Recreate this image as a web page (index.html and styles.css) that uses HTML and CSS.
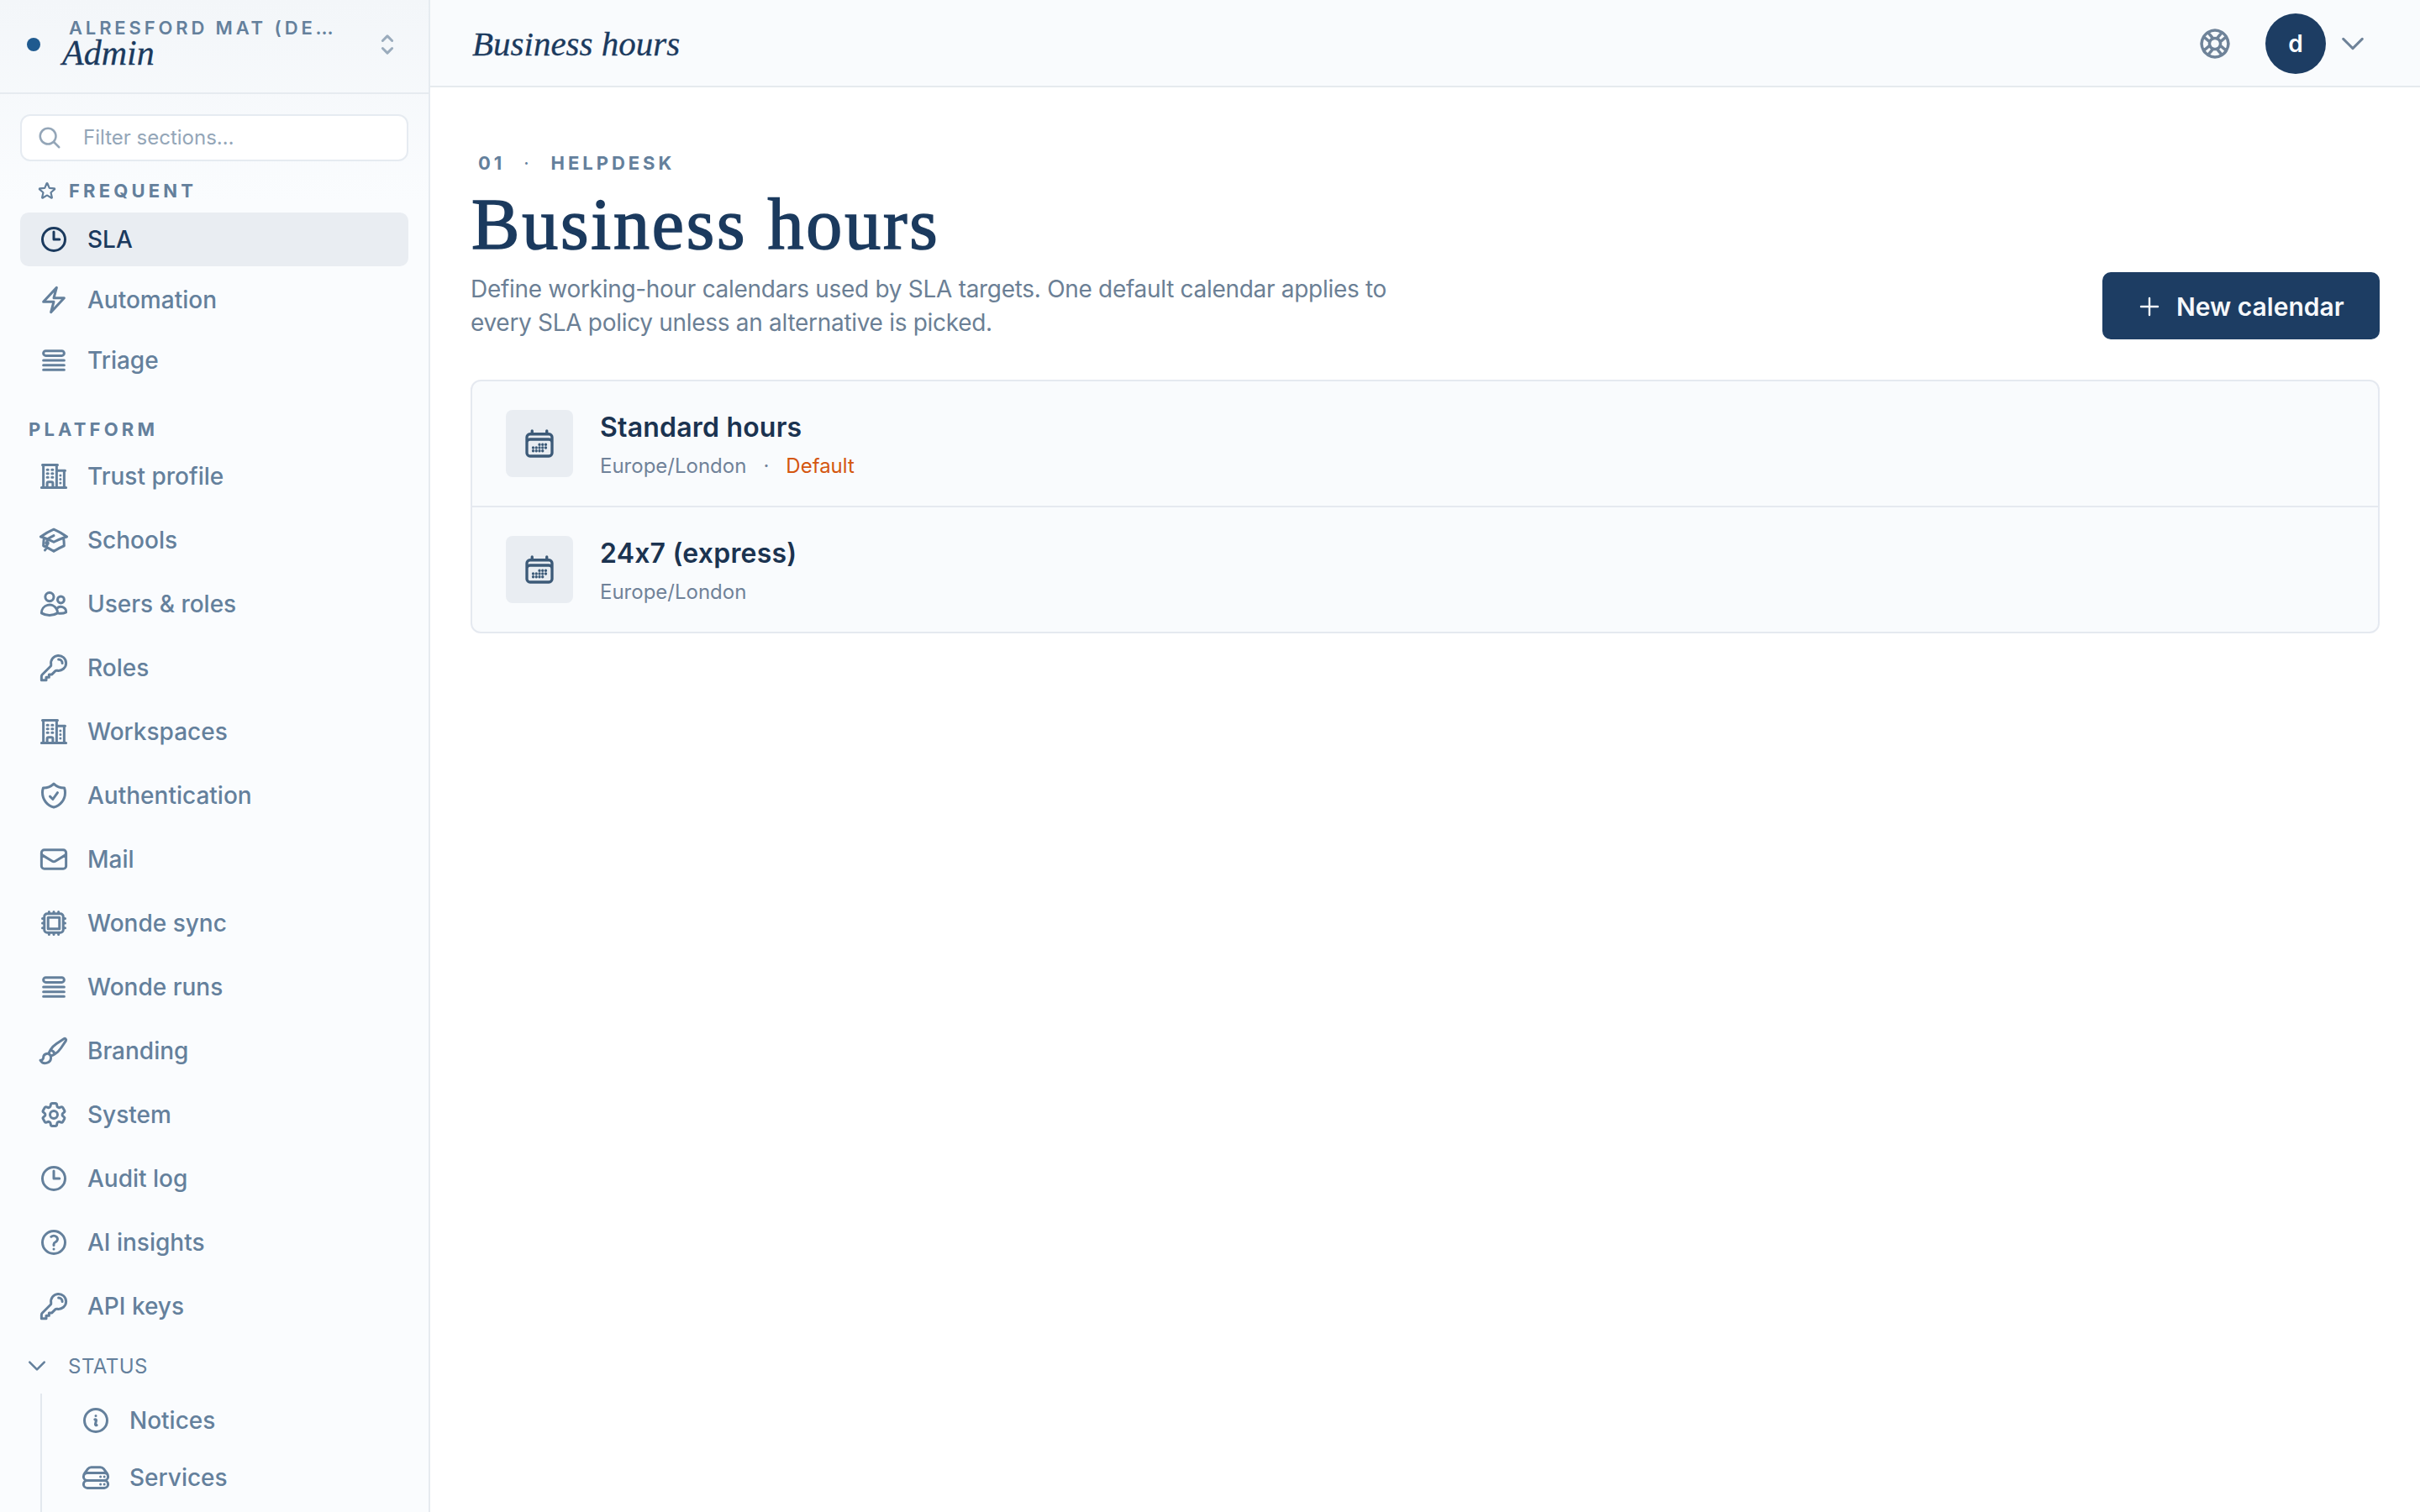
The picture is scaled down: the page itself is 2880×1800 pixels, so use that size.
FILE: index.html
```html
<!DOCTYPE html>
<html lang="en">
<head>
<meta charset="utf-8">
<title>Business hours</title>
<link rel="stylesheet" href="styles.css">
</head>
<body>
<svg class="sprite" xmlns="http://www.w3.org/2000/svg">
<symbol id="clock" viewBox="0 0 24 24"><path d="M12 6v6h4.5m4.5 0a9 9 0 1 1-18 0 9 9 0 0 1 18 0Z"/></symbol>
<symbol id="bolt" viewBox="0 0 24 24"><path d="m3.75 13.5 10.5-11.25L12 10.5h8.25L9.75 21.75 12 13.5H3.75Z"/></symbol>
<symbol id="queue" viewBox="0 0 24 24"><path d="M3.75 12h16.5m-16.5 3.75h16.5M3.75 19.5h16.5M5.625 4.5h12.75a1.875 1.875 0 0 1 0 3.75H5.625a1.875 1.875 0 0 1 0-3.75Z"/></symbol>
<symbol id="star" viewBox="0 0 24 24"><path d="M11.48 3.499a.562.562 0 0 1 1.04 0l2.125 5.111a.563.563 0 0 0 .475.345l5.518.442c.499.04.701.663.321.988l-4.204 3.602a.563.563 0 0 0-.182.557l1.285 5.385a.562.562 0 0 1-.84.61l-4.725-2.885a.562.562 0 0 0-.586 0L6.982 20.54a.562.562 0 0 1-.84-.61l1.285-5.386a.562.562 0 0 0-.182-.557l-4.204-3.602a.562.562 0 0 1 .321-.988l5.518-.442a.563.563 0 0 0 .475-.345L11.48 3.5Z"/></symbol>
<symbol id="building" viewBox="0 0 24 24"><path d="M2.25 21h19.5m-18-18v18m10.5-18v18m6-13.5V21M6.75 6.75h.75m-.75 3h.75m-.75 3h.75m3-6h.75m-.75 3h.75m-.75 3h.75M6.75 21v-3.375c0-.621.504-1.125 1.125-1.125h2.25c.621 0 1.125.504 1.125 1.125V21M3 3h12m-.75 4.5H21m-3.75 3.75h.008v.008h-.008v-.008Zm0 3h.008v.008h-.008v-.008Zm0 3h.008v.008h-.008v-.008Z"/></symbol>
<symbol id="cap" viewBox="0 0 24 24"><path d="M4.26 10.147a60.438 60.438 0 0 0-.491 6.347A48.62 48.62 0 0 1 12 20.904a48.62 48.62 0 0 1 8.232-4.41 60.46 60.46 0 0 0-.491-6.347m-15.482 0a50.636 50.636 0 0 0-2.658-.813A59.906 59.906 0 0 1 12 3.493a59.903 59.903 0 0 1 10.399 5.84c-.896.248-1.783.52-2.658.814m-15.482 0A50.717 50.717 0 0 1 12 13.489a50.702 50.702 0 0 1 7.74-3.342M6.75 15a.75.75 0 1 0 0-1.5.75.75 0 0 0 0 1.5Zm0 0v-3.675A55.378 55.378 0 0 1 12 8.443m-7.007 11.55A5.981 5.981 0 0 0 6.75 15.75v-1.5"/></symbol>
<symbol id="users" viewBox="0 0 24 24"><path d="M15 19.128a9.38 9.38 0 0 0 2.625.372 9.337 9.337 0 0 0 4.121-.952 4.125 4.125 0 0 0-7.533-2.493M15 19.128v-.003c0-1.113-.285-2.16-.786-3.07M15 19.128v.106A12.318 12.318 0 0 1 8.624 21c-2.331 0-4.512-.645-6.374-1.766l-.001-.109a6.375 6.375 0 0 1 11.964-3.07M12 6.375a3.375 3.375 0 1 1-6.75 0 3.375 3.375 0 0 1 6.75 0Zm8.25 2.25a2.625 2.625 0 1 1-5.25 0 2.625 2.625 0 0 1 5.25 0Z"/></symbol>
<symbol id="key" viewBox="0 0 24 24"><path d="M15.75 5.25a3 3 0 0 1 3 3m3 0a6 6 0 0 1-7.029 5.912c-.563-.097-1.159.026-1.563.43L10.5 17.25H8.25v2.25H6v2.25H2.25v-2.818c0-.597.237-1.17.659-1.591l6.499-6.499c.404-.404.527-1 .43-1.563A6 6 0 1 1 21.75 8.25Z"/></symbol>
<symbol id="shield" viewBox="0 0 24 24"><path d="M9 12.75 11.25 15 15 9.75m-3-7.036A11.959 11.959 0 0 1 3.598 6 11.99 11.99 0 0 0 3 9.749c0 5.592 3.824 10.29 9 11.623 5.176-1.332 9-6.03 9-11.622 0-1.31-.21-2.571-.598-3.751h-.152c-3.196 0-6.1-1.248-8.25-3.285Z"/></symbol>
<symbol id="mail" viewBox="0 0 24 24"><path d="M21.75 6.75v10.5a2.25 2.25 0 0 1-2.25 2.25h-15a2.25 2.25 0 0 1-2.25-2.25V6.75m19.5 0A2.25 2.25 0 0 0 19.5 4.5h-15a2.25 2.25 0 0 0-2.25 2.25m19.5 0v.243a2.25 2.25 0 0 1-1.07 1.916l-7.5 4.615a2.25 2.25 0 0 1-2.36 0L3.32 8.91a2.25 2.25 0 0 1-1.07-1.916V6.75"/></symbol>
<symbol id="chip" viewBox="0 0 24 24"><path d="M8.25 3v1.5M4.5 8.25H3m18 0h-1.5M4.5 12H3m18 0h-1.5m-15 3.75H3m18 0h-1.5M8.25 19.5V21M12 3v1.5m0 15V21m3.75-18v1.5m0 15V21m-9-1.5h10.5a2.25 2.25 0 0 0 2.25-2.25V6.75a2.25 2.25 0 0 0-2.25-2.25H6.75A2.25 2.25 0 0 0 4.5 6.75v10.5a2.25 2.25 0 0 0 2.25 2.25Zm.75-12h9v9h-9v-9Z"/></symbol>
<symbol id="brush" viewBox="0 0 24 24"><path d="M9.53 16.122a3 3 0 0 0-5.78 1.128 2.25 2.25 0 0 1-2.4 2.245 4.5 4.5 0 0 0 8.4-2.245c0-.399-.078-.78-.22-1.128Zm0 0a15.998 15.998 0 0 0 3.388-1.62m-5.043-.025a15.994 15.994 0 0 1 1.622-3.395m3.42 3.42a15.995 15.995 0 0 0 4.764-4.648l3.876-5.814a1.151 1.151 0 0 0-1.597-1.597L14.146 6.32a15.996 15.996 0 0 0-4.649 4.763m3.42 3.42a6.776 6.776 0 0 0-3.42-3.42"/></symbol>
<symbol id="cog" viewBox="0 0 24 24"><path d="M9.594 3.94c.09-.542.56-.94 1.11-.94h2.593c.55 0 1.02.398 1.11.94l.213 1.281c.063.374.313.686.645.87.074.04.147.083.22.127.325.196.72.257 1.075.124l1.217-.456a1.125 1.125 0 0 1 1.37.49l1.296 2.247a1.125 1.125 0 0 1-.26 1.431l-1.003.827c-.293.241-.438.613-.43.992a7.723 7.723 0 0 1 0 .255c-.008.378.137.75.43.991l1.004.827c.424.35.534.955.26 1.43l-1.298 2.247a1.125 1.125 0 0 1-1.369.491l-1.217-.456c-.355-.133-.75-.072-1.076.124a6.47 6.47 0 0 1-.22.128c-.331.183-.581.495-.644.869l-.213 1.281c-.09.543-.56.94-1.11.94h-2.594c-.55 0-1.019-.398-1.11-.94l-.213-1.281c-.062-.374-.312-.686-.644-.87a6.52 6.52 0 0 1-.22-.127c-.325-.196-.72-.257-1.076-.124l-1.217.456a1.125 1.125 0 0 1-1.369-.49l-1.297-2.247a1.125 1.125 0 0 1 .26-1.431l1.004-.827c.292-.24.437-.613.43-.991a6.932 6.932 0 0 1 0-.255c.007-.38-.138-.751-.43-.992l-1.004-.827a1.125 1.125 0 0 1-.26-1.43l1.297-2.247a1.125 1.125 0 0 1 1.37-.491l1.216.456c.356.133.751.072 1.076-.124.072-.044.146-.086.22-.128.332-.183.582-.495.644-.869l.214-1.28Z"/><path d="M15 12a3 3 0 1 1-6 0 3 3 0 0 1 6 0Z"/></symbol>
<symbol id="question" viewBox="0 0 24 24"><path d="M9.879 7.519c1.171-1.025 3.071-1.025 4.242 0 1.172 1.025 1.172 2.687 0 3.712-.203.179-.43.326-.67.442-.745.361-1.45.999-1.45 1.827v.75M21 12a9 9 0 1 1-18 0 9 9 0 0 1 18 0Zm-9 5.25h.008v.008H12v-.008Z"/></symbol>
<symbol id="info" viewBox="0 0 24 24"><path d="m11.25 11.25.041-.02a.75.75 0 0 1 1.063.852l-.708 2.836a.75.75 0 0 0 1.063.853l.041-.021M21 12a9 9 0 1 1-18 0 9 9 0 0 1 18 0Zm-9-3.75h.008v.008H12V8.25Z"/></symbol>
<symbol id="server" viewBox="0 0 24 24"><path d="M5.25 14.25h13.5m-13.5 0a3 3 0 0 1-3-3m3 3a3 3 0 1 0 0 6h13.5a3 3 0 1 0 0-6m-16.5-3a3 3 0 0 1 3-3h13.5a3 3 0 0 1 3 3m-19.5 0a4.5 4.5 0 0 1 .9-2.7L5.737 5.1a3.375 3.375 0 0 1 2.7-1.35h7.126c1.062 0 2.062.5 2.7 1.35l2.587 3.45a4.5 4.5 0 0 1 .9 2.7m0 0a3 3 0 0 1-3 3m0 3h.008v.008h-.008v-.008Zm0-6h.008v.008h-.008v-.008Zm-3 6h.008v.008h-.008v-.008Zm0-6h.008v.008h-.008v-.008Z"/></symbol>
<symbol id="buoy" viewBox="0 0 24 24"><path d="M16.712 4.33a9.027 9.027 0 0 1 1.652 1.306c.51.51.944 1.064 1.306 1.652M16.712 4.33l-3.448 4.138m3.448-4.138a9.014 9.014 0 0 0-9.424 0M19.67 7.288l-4.138 3.448m4.138-3.448a9.014 9.014 0 0 1 0 9.424m-4.138-5.976a3.736 3.736 0 0 0-.88-1.388 3.737 3.737 0 0 0-1.388-.88m2.268 2.268a3.765 3.765 0 0 1 0 2.528m-2.268-4.796a3.765 3.765 0 0 0-2.528 0m4.796 4.796c-.181.506-.475.982-.88 1.388a3.736 3.736 0 0 1-1.388.88m2.268-2.268 4.138 3.448m0 0a9.027 9.027 0 0 1-1.306 1.652c-.51.51-1.064.944-1.652 1.306m0 0-3.448-4.138m3.448 4.138a9.014 9.014 0 0 1-9.424 0m5.976-4.138a3.765 3.765 0 0 1-2.528 0m0 0a3.736 3.736 0 0 1-1.388-.88 3.737 3.737 0 0 1-.88-1.388m2.268 2.268L7.288 19.67m0 0a9.024 9.024 0 0 1-1.652-1.306 9.027 9.027 0 0 1-1.306-1.652m0 0 4.138-3.448M4.33 16.712a9.014 9.014 0 0 1 0-9.424m4.138 5.976a3.765 3.765 0 0 1 0-2.528m0 0c.181-.506.475-.982.88-1.388a3.736 3.736 0 0 1 1.388-.88m-2.268 2.268L4.33 7.288m6.406 1.18L7.288 4.33m0 0a9.024 9.024 0 0 0-1.652 1.306A9.025 9.025 0 0 0 4.33 7.288"/></symbol>
<symbol id="down" viewBox="0 0 24 24"><path d="m19.5 8.25-7.5 7.5-7.5-7.5"/></symbol>
<symbol id="updown" viewBox="0 0 24 24"><path d="M8.25 15 12 18.75 15.75 15m-7.5-6L12 5.25 15.75 9"/></symbol>
<symbol id="plus" viewBox="0 0 24 24"><path d="M12 4.5v15m7.5-7.5h-15"/></symbol>
<symbol id="search" viewBox="0 0 24 24"><path d="m21 21-5.197-5.197m0 0A7.5 7.5 0 1 0 5.196 5.196a7.5 7.5 0 0 0 10.607 10.607Z"/></symbol>
<symbol id="calendar" viewBox="0 0 24 24"><path d="M6.75 3v2.25M17.25 3v2.25M3 18.75V7.5a2.25 2.25 0 0 1 2.25-2.25h13.5A2.25 2.25 0 0 1 21 7.5v11.25m-18 0A2.25 2.25 0 0 0 5.25 21h13.5A2.25 2.25 0 0 0 21 18.75m-18 0v-7.5A2.25 2.25 0 0 1 5.25 9h13.5A2.25 2.25 0 0 1 21 11.25v7.5m-9-6h.008v.008H12v-.008ZM12 15h.008v.008H12V15Zm0 2.25h.008v.008H12v-.008ZM9.75 15h.008v.008H9.75V15Zm0 2.25h.008v.008H9.75v-.008ZM7.5 15h.008v.008H7.5V15Zm0 2.25h.008v.008H7.5v-.008Zm6.75-4.5h.008v.008h-.008v-.008Zm0 2.25h.008v.008h-.008V15Zm0 2.25h.008v.008h-.008v-.008Zm2.25-4.5h.008v.008H16.5v-.008Zm0 2.25h.008V15H16.5v-.008Z"/></symbol>
</svg>

<div class="app">
  <aside class="sidebar">
    <div class="switcher">
      <span class="dot"></span>
      <div class="switcher-text">
        <div class="org">ALRESFORD MAT (DE…</div>
        <div class="role">Admin</div>
      </div>
      <svg class="ic ic-updown"><use href="#updown"/></svg>
    </div>

    <div class="search">
      <svg class="ic ic-search"><use href="#search"/></svg>
      <span class="search-text">Filter sections…</span>
    </div>

    <div class="label label-frequent"><svg class="ic ic-star"><use href="#star"/></svg>FREQUENT</div>
    <nav class="nav nav-frequent">
      <a class="row active"><svg class="ic"><use href="#clock"/></svg>SLA</a>
      <a class="row"><svg class="ic"><use href="#bolt"/></svg>Automation</a>
      <a class="row"><svg class="ic"><use href="#queue"/></svg>Triage</a>
    </nav>

    <div class="label label-platform">PLATFORM</div>
    <nav class="nav nav-platform">
      <a class="row"><svg class="ic"><use href="#building"/></svg>Trust profile</a>
      <a class="row"><svg class="ic"><use href="#cap"/></svg>Schools</a>
      <a class="row"><svg class="ic"><use href="#users"/></svg>Users &amp; roles</a>
      <a class="row"><svg class="ic"><use href="#key"/></svg>Roles</a>
      <a class="row"><svg class="ic"><use href="#building"/></svg>Workspaces</a>
      <a class="row"><svg class="ic"><use href="#shield"/></svg>Authentication</a>
      <a class="row"><svg class="ic"><use href="#mail"/></svg>Mail</a>
      <a class="row"><svg class="ic"><use href="#chip"/></svg>Wonde sync</a>
      <a class="row"><svg class="ic"><use href="#queue"/></svg>Wonde runs</a>
      <a class="row"><svg class="ic"><use href="#brush"/></svg>Branding</a>
      <a class="row"><svg class="ic"><use href="#cog"/></svg>System</a>
      <a class="row"><svg class="ic"><use href="#clock"/></svg>Audit log</a>
      <a class="row"><svg class="ic"><use href="#question"/></svg>AI insights</a>
      <a class="row"><svg class="ic"><use href="#key"/></svg>API keys</a>
    </nav>

    <div class="group"><svg class="ic ic-group"><use href="#down"/></svg>STATUS</div>
    <nav class="sub">
      <a class="row"><svg class="ic"><use href="#info"/></svg>Notices</a>
      <a class="row"><svg class="ic"><use href="#server"/></svg>Services</a>
    </nav>
  </aside>

  <main class="main">
    <header class="topbar">
      <div class="topbar-title">Business hours</div>
      <svg class="ic ic-buoy"><use href="#buoy"/></svg>
      <div class="avatar">d</div>
      <svg class="ic ic-menu"><use href="#down"/></svg>
    </header>

    <section class="content">
      <div class="page-head">
        <div class="page-intro">
          <div class="eyebrow"><span>01</span><span class="eyebrow-dot">·</span><span>HELPDESK</span></div>
          <h1 class="page-title">Business hours</h1>
          <p class="page-desc">Define working-hour calendars used by SLA targets. One default calendar applies to every SLA policy unless an alternative is picked.</p>
        </div>
        <button class="btn" type="button"><svg class="ic ic-plus"><use href="#plus"/></svg>New calendar</button>
      </div>

      <div class="card">
        <div class="card-row">
          <div class="tile"><svg class="ic ic-cal"><use href="#calendar"/></svg></div>
          <div class="cal-text">
            <div class="cal-name">Standard hours</div>
            <div class="cal-meta"><span>Europe/London</span><span class="meta-dot">·</span><span class="default">Default</span></div>
          </div>
        </div>
        <div class="card-row">
          <div class="tile"><svg class="ic ic-cal"><use href="#calendar"/></svg></div>
          <div class="cal-text">
            <div class="cal-name">24x7 (express)</div>
            <div class="cal-meta"><span>Europe/London</span></div>
          </div>
        </div>
      </div>
    </section>
  </main>
</div>
</body>
</html>
```

FILE: styles.css
```css
* { box-sizing: border-box; }
html, body { margin: 0; padding: 0; height: 100%; }
body {
  font-family: Inter, "Liberation Sans", sans-serif;
  font-feature-settings: "calt" 0;
  color: #1b3350;
  background: #fff;
  overflow: hidden;
}
.sprite { display: none; }
.ic {
  flex: none;
  width: 36px;
  height: 36px;
  fill: none;
  stroke: currentColor;
  stroke-width: 2;
  stroke-linecap: round;
  stroke-linejoin: round;
}
.app { display: flex; height: 1800px; }

/* Sidebar */
.sidebar {
  flex: none;
  width: 512px;
  height: 1800px;
  display: flex;
  flex-direction: column;
  overflow: hidden;
  border-right: 2px solid #e6ebf0;
  background: linear-gradient(#f3f6f9, #fafcfe 240px);
  color: #64809c;
}
.switcher {
  flex: none;
  height: 112px;
  display: flex;
  align-items: center;
  padding: 0 31px 10px 32px;
  border-bottom: 2px solid #e6ebf0;
}
.dot { flex: none; width: 16px; height: 16px; border-radius: 50%; background: #1f5a8f; margin: 6px 26px 0 0; }
.switcher-text { flex: 1; min-width: 0; }
.org {
  font-size: 22px;
  line-height: 24px;
  font-weight: 600;
  letter-spacing: 0.175em;
  color: #64809c;
  white-space: nowrap;
  margin: 2px 0 0 8px;
}
.role {
  font-family: "Liberation Serif", serif;
  font-style: italic;
  font-size: 42px;
  line-height: 36px;
  color: #1b3a5e;
  -webkit-text-stroke: 0.3px #1b3a5e;
}
.ic-updown { margin-top: 6px; color: #9aabbc; }

.search {
  flex: none;
  margin: 24px 24px 0;
  height: 56px;
  display: flex;
  align-items: center;
  padding-left: 18px;
  border: 2px solid #e6ebf1;
  border-radius: 12px;
  background: #fff;
  color: #94a6b8;
}
.ic-search { width: 30px; height: 30px; margin-right: 25px; }
.search-text { font-size: 24px; line-height: 32px; }

.label {
  flex: none;
  display: flex;
  align-items: center;
  font-size: 22px;
  line-height: 24px;
  font-weight: 700;
  letter-spacing: 0.19em;
}
.label-frequent { margin: 23px 0 14px 44px; }
.ic-star { width: 24px; height: 24px; margin-right: 14px; stroke-width: 2.2; }
.label-platform { margin: 38px 0 12px 34px; }

.nav { flex: none; display: flex; flex-direction: column; }
.nav-frequent { gap: 8px; }
.nav-platform { gap: 12px; }
.row {
  flex: none;
  display: flex;
  align-items: center;
  gap: 22px;
  height: 64px;
  margin: 0 24px;
  padding-left: 22px;
  border-radius: 10px;
  font-size: 28px;
  font-weight: 450;
  line-height: 36px;
  color: #64809c;
}
.row.active { background: #e9edf2; color: #1b3a5e; font-weight: 500; }

.group {
  flex: none;
  display: flex;
  align-items: center;
  height: 40px;
  margin: 19px 0 13px 30px;
  font-size: 24px;
  letter-spacing: 0.02em;
  color: #64809c;
}
.ic-group { width: 28px; height: 28px; margin-right: 23px; stroke-width: 2.2; }
.sub {
  flex: 1;
  display: flex;
  flex-direction: column;
  gap: 4px;
  margin-left: 48px;
  border-left: 2px solid #e3e8ee;
}
.sub .row { margin: 0; padding-left: 46px; }

/* Main */
.main { flex: 1; min-width: 0; display: flex; flex-direction: column; }
.topbar {
  flex: none;
  height: 104px;
  display: flex;
  align-items: center;
  padding: 2px 62px 0 50px;
  background: #f9fbfd;
  border-bottom: 2px solid #e6eaee;
}
.topbar-title {
  flex: 1;
  font-family: "Liberation Serif", serif;
  font-style: italic;
  font-size: 41px;
  line-height: 48px;
  color: #1b3a5e;
  -webkit-text-stroke: 0.3px #1b3a5e;
}
.ic-buoy { width: 42px; height: 42px; color: #6f8399; }
.avatar {
  flex: none;
  width: 72px;
  height: 72px;
  margin-left: 39px;
  border-radius: 50%;
  background: #1d3d63;
  color: #fff;
  display: flex;
  align-items: center;
  justify-content: center;
  font-size: 28px;
  font-weight: 600;
}
.ic-menu { margin-left: 14px; color: #6f8399; }

.content { padding: 0 48px; }
.page-head { display: flex; align-items: flex-end; justify-content: space-between; }
.page-intro { width: 1120px; }
.eyebrow {
  display: flex;
  padding: 0 0 0 9px;
  margin-top: 77px;
  font-size: 22px;
  line-height: 26px;
  font-weight: 700;
  letter-spacing: 0.18em;
  color: #64809c;
}
.eyebrow-dot { margin: 0 22px; font-weight: 400; }
.page-title {
  margin: 14px 0 0 1px;
  font-family: "Liberation Serif", serif;
  font-weight: 400;
  font-size: 86px;
  line-height: 92px;
  letter-spacing: 2.8px;
  color: #1b3a5e;
  -webkit-text-stroke: 1.6px #1b3a5e;
}
.page-desc {
  margin: 11px 0 0;
  font-size: 28px;
  line-height: 40px;
  letter-spacing: -0.3px;
  color: #6b7f95;
}
.btn {
  flex: none;
  width: 330px;
  height: 80px;
  display: flex;
  align-items: center;
  padding: 2px 0 0 40px;
  border: 0;
  border-radius: 10px;
  background: #1d3d63;
  color: #f6f8fb;
  font: inherit;
  font-size: 30px;
  font-weight: 600;
}
.ic-plus { width: 32px; height: 32px; margin-right: 16px; stroke-width: 1.8; }

.card {
  margin-top: 48px;
  border: 2px solid #e5e9f0;
  border-radius: 12px;
  background: #f9fbfd;
  overflow: hidden;
}
.card-row {
  height: 148px;
  display: flex;
  align-items: center;
  gap: 32px;
  padding: 0 0 0 40px;
}
.card-row + .card-row { height: 150px; padding-bottom: 1px; border-top: 2px solid #e5e9f0; }
.tile {
  flex: none;
  width: 80px;
  height: 80px;
  border-radius: 8px;
  background: #e9edf2;
  color: #3c5a78;
  display: flex;
  align-items: center;
  justify-content: center;
}
.ic-cal { width: 40px; height: 40px; }
.cal-text { margin-top: 4px; }
.cal-name { font-size: 32px; line-height: 40px; font-weight: 600; letter-spacing: 0.2px; color: #1b3350; }
.cal-meta { display: flex; margin-top: 10px; font-size: 24px; line-height: 32px; color: #708299; }
.meta-dot { margin: 0 20px; }
.default { color: #d4560f; }
```
